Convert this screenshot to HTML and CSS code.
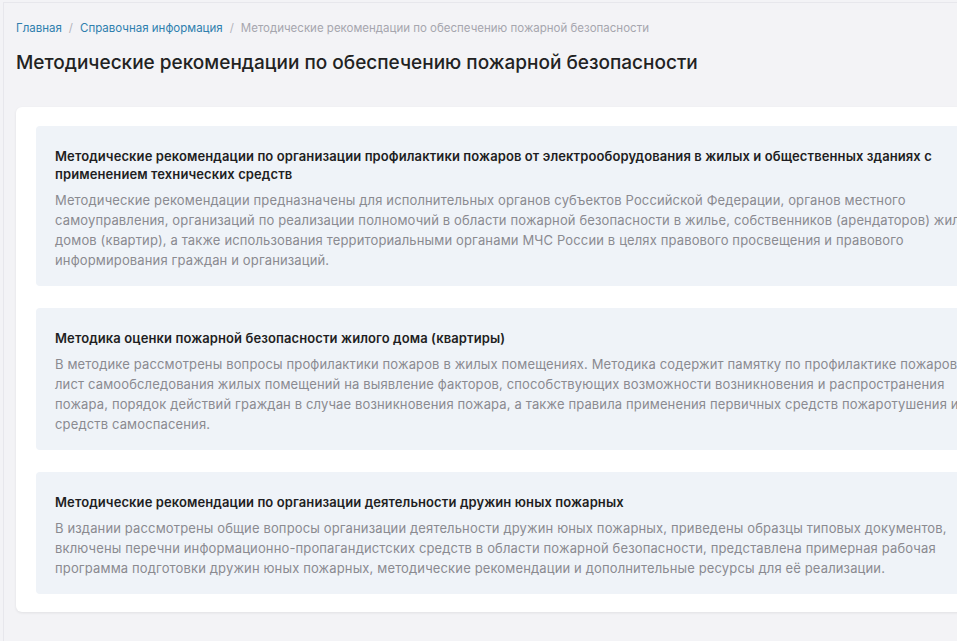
FILE: index.html
```html
<!DOCTYPE html>
<html lang="ru">
<head>
<meta charset="utf-8">
<title>Методические рекомендации по обеспечению пожарной безопасности</title>
<link rel="stylesheet" href="styles.css">
</head>
<body>
<div class="frame">
  <nav class="crumbs">
    <a href="#" class="crumb-link">Главная</a>
    <span class="sep">/</span>
    <a href="#" class="crumb-link">Справочная информация</a>
    <span class="sep">/</span>
    <span class="crumb-current">Методические рекомендации по обеспечению пожарной безопасности</span>
  </nav>
  <h1 class="page-title">Методические рекомендации по обеспечению пожарной безопасности</h1>
  <section class="card">
    <article class="item">
      <h2 class="item-title">Методические рекомендации по организации профилактики пожаров от электрооборудования в жилых и общественных зданиях с применением технических средств</h2>
      <p class="item-text">Методические рекомендации предназначены для исполнительных органов субъектов Российской Федерации, органов местного самоуправления, организаций по реализации полномочий в области пожарной безопасности в жилье, собственников (арендаторов) жилых домов (квартир), а также использования территориальными органами МЧС России в целях правового просвещения и правового информирования граждан и организаций.</p>
    </article>
    <article class="item">
      <h2 class="item-title">Методика оценки пожарной безопасности жилого дома (квартиры)</h2>
      <p class="item-text">В методике рассмотрены вопросы профилактики пожаров в жилых помещениях. Методика содержит памятку по профилактике пожаров, лист самообследования жилых помещений на выявление факторов, способствующих возможности возникновения и распространения пожара, порядок действий граждан в случае возникновения пожара, а также правила применения первичных средств пожаротушения и средств самоспасения.</p>
    </article>
    <article class="item">
      <h2 class="item-title">Методические рекомендации по организации деятельности дружин юных пожарных</h2>
      <p class="item-text">В издании рассмотрены общие вопросы организации деятельности дружин юных пожарных, приведены образцы типовых документов, включены перечни информационно-пропагандистских средств в области пожарной безопасности, представлена примерная рабочая программа подготовки дружин юных пожарных, методические рекомендации и дополнительные ресурсы для её реализации.</p>
    </article>
  </section>
</div>
</body>
</html>
```

FILE: styles.css
```css
html {
  overflow: hidden;
}
body {
  margin: 0;
  background: #f3f3f6;
  font-family: Inter, "Noto Sans", "Liberation Sans", sans-serif;
  color: #222;
  width: 1030px;
}
.frame {
  margin: 2px 0 0 3px;
  border-top: 1px solid #e7e7ec;
  border-left: 1px solid #e7e7ec;
  padding: 17px 0 30px 12px;
  min-height: 640px;
}
.crumbs {
  font-size: 11.5px;
  line-height: 16px;
  display: flex;
  gap: 7px;
  color: #a6a6ae;
}
.crumb-link {
  color: #2f7fae;
  text-decoration: none;
}
.sep {
  color: #b4b4bc;
}
.crumb-current {
  color: #a6a6ae;
}
.page-title {
  margin: 14px 0 0;
  font-size: 19px;
  line-height: 26px;
  font-weight: 500;
  color: #222;
}
.card {
  margin-top: 31px;
  background: #fff;
  border-radius: 6px;
  box-shadow: 0 1px 3px rgba(0, 0, 0, 0.08);
  padding: 19px 20px 18px 20px;
  display: flex;
  flex-direction: column;
  gap: 22px;
}
.item {
  background: #eff3f8;
  border-radius: 4px;
  padding: 21px 20px 16px 19px;
}
.item-title {
  margin: 0;
  font-size: 13px;
  line-height: 18px;
  font-weight: 600;
  color: #1e1e22;
  letter-spacing: 0.1px;
}
.item-text {
  margin: 7px 0 0;
  font-size: 13px;
  line-height: 20px;
  color: #8a8a90;
  letter-spacing: 0.14px;
}
```
